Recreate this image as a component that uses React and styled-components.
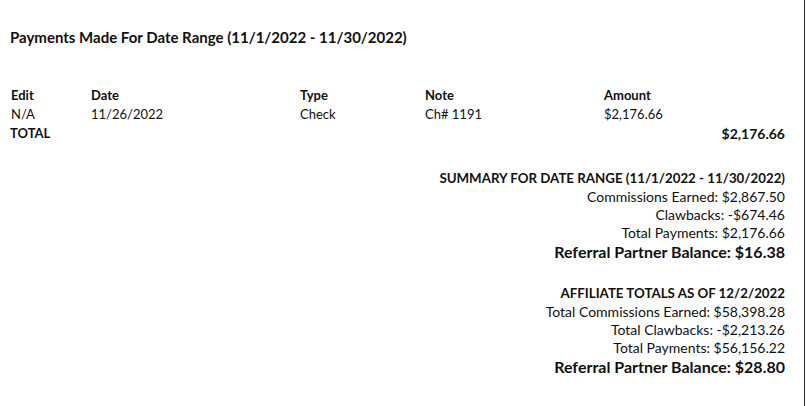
import styled, { createGlobalStyle } from "styled-components";

const GlobalStyle = createGlobalStyle`
    html, body {
        margin: 0;
        padding: 0;
        background: #fff;
    }
    body {
        font-family: Lato, "Open Sans", sans-serif;
        color: #111;
    }
`

const Page = styled.div`
    width: 805px;
    height: 406px;
    box-sizing: border-box;
    border-right: 1px solid #333;
    padding: 27px 19px 0 10px;
`
const Title = styled.h2`
    margin: 0 0 39px 0;
    font-size: 15px;
    font-weight: 700;
    line-height: 20px;
`
const Table = styled.div`
    display: grid;
    grid-template-columns: 80px 209px 125px 179px 1fr;
    font-size: 13px;
    line-height: 19px;
`
const HeadCell = styled.div`
    font-weight: 700;
    padding-left: 1px;
`
const Cell = styled.div`
    padding-left: 1px;
`
const TotalRow = styled.div`
    display: flex;
    justify-content: space-between;
    font-weight: 700;
    font-size: 13px;
    line-height: 19px;
`
const TotalAmount = styled.span`
    font-size: 14px;
`
const Summary = styled.div`
    display: flex;
    flex-direction: column;
    align-items: flex-end;
    margin-top: ${(p) => p.$gap}px;
    font-size: 14px;
    line-height: 18px;
`
const SummaryTitle = styled.div`
    font-weight: 700;
    font-size: 13.3px;
    line-height: 19px;
`
const Balance = styled.div`
    font-weight: 700;
    font-size: 16px;
    line-height: 19px;
`

const payments = [
    { edit: "N/A", date: "11/26/2022", type: "Check", note: "Ch# 1191", amount: "$2,176.66" },
];

const App = () => {
    return (
        <>
            <GlobalStyle />
            <Page>
                <Title>Payments Made For Date Range (11/1/2022 - 11/30/2022)</Title>
                <Table>
                    <HeadCell>Edit</HeadCell>
                    <HeadCell>Date</HeadCell>
                    <HeadCell>Type</HeadCell>
                    <HeadCell>Note</HeadCell>
                    <HeadCell>Amount</HeadCell>
                    {payments.map((p) => (
                        <>
                            <Cell>{p.edit}</Cell>
                            <Cell>{p.date}</Cell>
                            <Cell>{p.type}</Cell>
                            <Cell>{p.note}</Cell>
                            <Cell>{p.amount}</Cell>
                        </>
                    ))}
                </Table>
                <TotalRow>
                    <span>TOTAL</span>
                    <TotalAmount>$2,176.66</TotalAmount>
                </TotalRow>
                <Summary $gap={26}>
                    <SummaryTitle>SUMMARY FOR DATE RANGE (11/1/2022 - 11/30/2022)</SummaryTitle>
                    <div>Commissions Earned: $2,867.50</div>
                    <div>Clawbacks: -$674.46</div>
                    <div>Total Payments: $2,176.66</div>
                    <Balance>Referral Partner Balance: $16.38</Balance>
                </Summary>
                <Summary $gap={23}>
                    <SummaryTitle>AFFILIATE TOTALS AS OF 12/2/2022</SummaryTitle>
                    <div>Total Commissions Earned: $58,398.28</div>
                    <div>Total Clawbacks: -$2,213.26</div>
                    <div>Total Payments: $56,156.22</div>
                    <Balance>Referral Partner Balance: $28.80</Balance>
                </Summary>
            </Page>
        </>
    );
};

export default App;
